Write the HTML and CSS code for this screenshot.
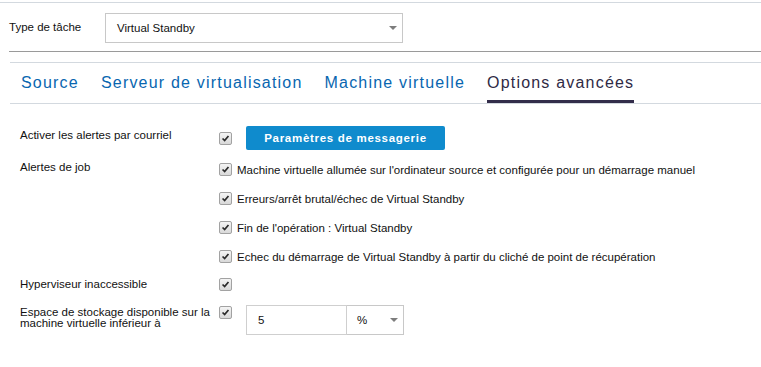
FILE: index.html
```html
<!DOCTYPE html>
<html lang="fr">
<head>
  <meta charset="UTF-8" />
  <title>Options avancées</title>
  <link rel="stylesheet" href="styles.css">
</head>
<body>
  <div class="page">
    <div class="task-row">
      <label class="task-label">Type de tâche</label>
      <div class="select task-select">
        <span>Virtual Standby</span>
        <span class="caret"></span>
      </div>
    </div>

    <div class="divider"></div>

    <nav class="tabs">
      <a class="tab">Source</a>
      <a class="tab">Serveur de virtualisation</a>
      <a class="tab">Machine virtuelle</a>
      <a class="tab active">Options avancées</a>
    </nav>

    <div class="options">
      <div class="row row-mail">
        <div class="label">Activer les alertes par courriel</div>
        <div class="field">
          <span class="check"><svg viewBox="0 0 13 13"><path d="M3 6.5 L5.5 9 L10 3.5" /></svg></span>
          <button class="btn">Paramètres de messagerie</button>
        </div>
      </div>

      <div class="row row-jobs">
        <div class="label">Alertes de job</div>
        <div class="list">
          <div class="item"><span class="check"><svg viewBox="0 0 13 13"><path d="M3 6.5 L5.5 9 L10 3.5" /></svg></span>Machine virtuelle allumée sur l'ordinateur source et configurée pour un démarrage manuel</div>
          <div class="item"><span class="check"><svg viewBox="0 0 13 13"><path d="M3 6.5 L5.5 9 L10 3.5" /></svg></span>Erreurs/arrêt brutal/échec de Virtual Standby</div>
          <div class="item"><span class="check"><svg viewBox="0 0 13 13"><path d="M3 6.5 L5.5 9 L10 3.5" /></svg></span>Fin de l'opération : Virtual Standby</div>
          <div class="item"><span class="check"><svg viewBox="0 0 13 13"><path d="M3 6.5 L5.5 9 L10 3.5" /></svg></span>Echec du démarrage de Virtual Standby à partir du cliché de point de récupération</div>
        </div>
      </div>

      <div class="row row-hyper">
        <div class="label">Hyperviseur inaccessible</div>
        <div class="field">
          <span class="check"><svg viewBox="0 0 13 13"><path d="M3 6.5 L5.5 9 L10 3.5" /></svg></span>
        </div>
      </div>

      <div class="row row-space">
        <div class="label two-line">Espace de stockage disponible sur la machine virtuelle inférieur à</div>
        <div class="field top">
          <span class="check"><svg viewBox="0 0 13 13"><path d="M3 6.5 L5.5 9 L10 3.5" /></svg></span>
          <div class="input">5</div>
          <div class="select unit">
            <span>%</span>
            <span class="caret"></span>
          </div>
        </div>
      </div>
    </div>
  </div>
</body>
</html>
```

FILE: styles.css
```css
* {
  margin: 0; padding: 0; box-sizing: border-box;
}

body {
  background: #fff;
  color: #111;
  font-family: "Liberation Sans", Arial, sans-serif;
  font-size: 11.5px;
}

.page {
  margin-top: 2px;
  border-top: 1px solid #d3d9df;
}

.task-row {
  display: flex;
  align-items: center;
  padding: 10px 0 0 9px;
  height: 40px;
}

.task-label {
  width: 96px;
  margin-top: -2px;
}

.select {
  display: flex;
  align-items: center;
  justify-content: space-between;
  border: 1px solid #c8c8c8;
  background: #fff;
}

.task-select {
  width: 298px;
  height: 30px;
  padding: 0 5px 0 11px;
}

.caret {
  width: 0; height: 0;
  border-left: 4px solid transparent;
  border-right: 4px solid transparent;
  border-top: 4px solid #7d7d7d;
}

.divider {
  margin: 8px 0 0 9px;
  border-top: 1px solid #9a9a9a;
}

.tabs {
  display: flex;
  gap: 22px;
  margin: 10px 0 0 10px;
  padding-left: 11px;
  border-top: 1px solid #d3d9df;
  border-bottom: 1px solid #d3d9df;
  height: 42px;
}

.tab {
  font-size: 16px;
  letter-spacing: 1.2px;
  color: #0866b0;
  padding-top: 11px;
  cursor: pointer;
}

.tab.active {
  color: #2f2a45;
  border-bottom: 3px solid #332d4a;
}

.options {
  padding: 22px 0 0 20px;
}

.row {
  display: flex;
}

.row-jobs { margin-top: 11px; }
.row-hyper { margin-top: 11px; }
.row-space { margin-top: 12px; }

.label {
  width: 199px;
  flex: none;
  line-height: 17px;
  padding-right: 4px;
}

.row-mail .label {
  padding-top: 1px;
}

.row-jobs .label {
  margin-top: -2px;
}

.label.two-line {
  line-height: 11px;
  padding-top: 2px;
}

.field {
  display: flex;
  align-items: center;
  gap: 14px;
  min-height: 17px;
}

.field.top {
  align-items: flex-start;
}

.list {
  display: flex;
  flex-direction: column;
  gap: 12px;
}

.item {
  display: flex;
  align-items: center;
  gap: 5px;
  height: 17px;
}

.check {
  width: 13px;
  height: 13px;
  flex: none;
  border: 1px solid #a2a2a2;
  border-radius: 2px;
  background: linear-gradient(#f4f4f4, #d9d9d9);
  display: inline-block;
}

.check svg {
  display: block;
  width: 11px;
  height: 11px;
  fill: none;
  stroke: #2a2a2a;
  stroke-width: 2;
}

.field.top .check {
  margin-top: 1px;
}

.btn {
  width: 199px;
  height: 24px;
  border: none;
  border-radius: 2px;
  background: #0f8bcd;
  color: #fff;
  font-family: inherit;
  font-size: 11.5px;
  font-weight: bold;
  letter-spacing: 0.7px;
}

.input {
  width: 101px;
  height: 30px;
  border: 1px solid #cfcfcf;
  padding: 0 11px;
  line-height: 28px;
}

.unit {
  width: 57px;
  height: 30px;
  margin-left: -14px;
  border-left: none;
  padding: 0 5px 0 10px;
}
```
